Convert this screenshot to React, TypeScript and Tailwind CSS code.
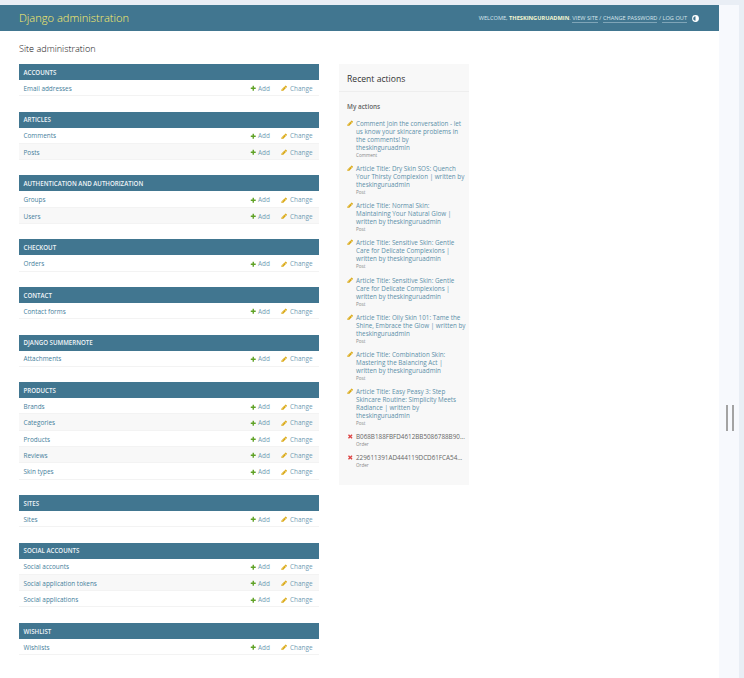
const sections: [string, string[]][] = [
  ["ACCOUNTS", ["Email addresses"]],
  ["ARTICLES", ["Comments", "Posts"]],
  ["AUTHENTICATION AND AUTHORIZATION", ["Groups", "Users"]],
  ["CHECKOUT", ["Orders"]],
  ["CONTACT", ["Contact forms"]],
  ["DJANGO SUMMERNOTE", ["Attachments"]],
  ["PRODUCTS", ["Brands", "Categories", "Products", "Reviews", "Skin types"]],
  ["SITES", ["Sites"]],
  ["SOCIAL ACCOUNTS", ["Social accounts", "Social application tokens", "Social applications"]],
  ["WISHLIST", ["Wishlists"]],
];

type Action = { kind: "change" | "delete"; lines: string[]; type: string };
const actions: Action[] = [
  { kind: "change", lines: ["Comment Join the conversation - let", "us know your skincare problems in", "the comments! by", "theskinguruadmin"], type: "Comment" },
  { kind: "change", lines: ["Article Title: Dry Skin SOS: Quench", "Your Thirsty Complexion | written by", "theskinguruadmin"], type: "Post" },
  { kind: "change", lines: ["Article Title: Normal Skin:", "Maintaining Your Natural Glow |", "written by theskinguruadmin"], type: "Post" },
  { kind: "change", lines: ["Article Title: Sensitive Skin: Gentle", "Care for Delicate Complexions |", "written by theskinguruadmin"], type: "Post" },
  { kind: "change", lines: ["Article Title: Sensitive Skin: Gentle", "Care for Delicate Complexions |", "written by theskinguruadmin"], type: "Post" },
  { kind: "change", lines: ["Article Title: Oily Skin 101: Tame the", "Shine, Embrace the Glow | written by", "theskinguruadmin"], type: "Post" },
  { kind: "change", lines: ["Article Title: Combination Skin:", "Mastering the Balancing Act |", "written by theskinguruadmin"], type: "Post" },
  { kind: "change", lines: ["Article Title: Easy Peasy 3: Step", "Skincare Routine: Simplicity Meets", "Radiance | written by", "theskinguruadmin"], type: "Post" },
  { kind: "delete", lines: ["B068B188FBFD4612BB5086788B90..."], type: "Order" },
  { kind: "delete", lines: ["229611391AD444119DCD61FCA54..."], type: "Order" },
];

function PlusIcon() {
  return (
    <svg viewBox="0 0 1792 1792" className="h-[6.5px] w-[6.5px] shrink-0">
      <path fill="#5fa225" d="M1600 796v192q0 40-28 68t-68 28h-416v416q0 40-28 68t-68 28h-192q-40 0-68-28t-28-68v-416h-416q-40 0-68-28t-28-68v-192q0-40 28-68t68-28h416v-416q0-40 28-68t68-28h192q40 0 68 28t28 68v416h416q40 0 68 28t28 68z" />
    </svg>
  );
}
function PencilIcon() {
  return (
    <svg viewBox="0 0 1792 1792" className="h-[6.5px] w-[6.5px] shrink-0">
      <path fill="#d9a60d" d="M491 1536l91-91-235-235-91 91v107h128v128h107zm523-928q0-22-22-22-10 0-17 7l-542 542q-7 7-7 17 0 22 22 22 10 0 17-7l542-542q7-7 7-17zm-54-192l416 416-832 832h-416v-416zm683 96q0 53-37 90l-166 166-416-416 166-165q36-38 90-38 53 0 91 38l235 234q37 39 37 91z" />
    </svg>
  );
}
function CrossIcon() {
  return (
    <svg viewBox="0 0 1792 1792" className="h-[6.5px] w-[6.5px] shrink-0">
      <path fill="#dd4646" d="M1490 1322q0 40-28 68l-136 136q-28 28-68 28t-68-28l-294-294-294 294q-28 28-68 28t-68-28l-136-136q-28-28-28-68t28-68l294-294-294-294q-28-28-28-68t28-68l136-136q28-28 68-28t68 28l294 294 294-294q28-28 68-28t68 28l136 136q28 28 28 68t-28 68l-294 294 294 294q28 28 28 68z" />
    </svg>
  );
}

function Section({ title, rows }: { title: string; rows: string[] }) {
  return (
    <section className="mb-[15.3px]">
      <div className="flex h-[16px] items-center bg-[#417690] pl-[4.5px] pt-[1px] text-[6.15px] font-semibold text-[#f0f5f8]">{title}</div>
      {rows.map((r, i) => (
        <div key={r} className={`flex h-[16.3px] items-center border-b border-[#f3f3f3] pl-[4.5px] pt-[2px] text-[6.4px] ${i % 2 === 1 ? "bg-[#f8f8f8]" : "bg-white"}`}>
          <span className="flex-1 text-[#447e9b]">{r}</span>
          <span className="flex w-[31px] items-center gap-[1.5px] text-[#6f9cb3]"><PlusIcon />Add</span>
          <span className="flex w-[38px] items-center gap-[2.5px] text-[#6f9cb3]"><PencilIcon />Change</span>
        </div>
      ))}
    </section>
  );
}

export default function App() {
  return (
    <div className="relative flex h-[678px] w-[744px] flex-col overflow-hidden bg-[#e9eef5] font-['Open_Sans','Noto_Sans',sans-serif]">
      <div className="h-[5px] shrink-0" />
      <div className="flex min-h-0 flex-1">
        <main className="w-[719px] bg-white">
          <header className="flex h-[26px] items-center justify-between bg-[#417690] pl-[19px] pr-[20px]">
            <span className="text-[11.1px] font-light text-[#fff06a]">Django administration</span>
            <div className="flex items-center pt-[1px] text-[5.65px] text-[#d8e6ec]">
              <span>
                WELCOME, <strong className="font-bold text-[#f4f7d0]">THESKINGURUADMIN</strong>.{" "}
                <span className="border-b border-[#7fa5b8]">VIEW SITE</span> /{" "}
                <span className="border-b border-[#7fa5b8]">CHANGE PASSWORD</span> /{" "}
                <span className="border-b border-[#7fa5b8]">LOG OUT</span>
              </span>
              <svg viewBox="0 0 16 16" className="ml-[5px] h-[7px] w-[7px]">
                <circle cx="8" cy="8" r="6.5" fill="none" stroke="#fff" strokeWidth="2.5" />
                <path d="M8 1.5a6.5 6.5 0 0 1 0 13z" fill="#fff" />
              </svg>
            </div>
          </header>
          <div className="px-[19px] pt-[11px]">
            <h1 className="h-[22px] text-[9.1px] font-light leading-[14px] text-[#111]">Site administration</h1>
            <div className="flex items-start gap-[20px]">
              <div className="w-[300px] shrink-0">
                {sections.map(([t, r]) => (
                  <Section key={t} title={t} rows={r} />
                ))}
              </div>
              <aside className="h-[421px] w-[130px] shrink-0 bg-[#f8f8f8]">
                <h2 className="flex h-[28px] items-center border-b border-[#eeeeee] pl-[8px] pt-[3px] text-[8.6px] text-[#333]">Recent actions</h2>
                <div className="px-[8px] pt-[10px]">
                  <h3 className="mb-[8px] text-[6.4px] leading-[10px] font-semibold text-[#666]">My actions</h3>
                  <ul className="flex flex-col gap-[6.15px]">
                    {actions.map((a, i) => (
                      <li key={i} className="flex gap-[2.5px]">
                        <span>{a.kind === "change" ? <PencilIcon /> : <CrossIcon />}</span>
                        <div className="min-w-0">
                          {a.lines.map((l, j) => (
                            <div key={j} className={`whitespace-nowrap text-[6.3px] leading-[8px] ${a.kind === "change" ? "text-[#5d90a9]" : "text-[#666]"}`}>{l}</div>
                          ))}
                          <div className="text-[4.6px] leading-[7px] text-[#888]">{a.type}</div>
                        </div>
                      </li>
                    ))}
                  </ul>
                </div>
              </aside>
            </div>
          </div>
        </main>
        <div className="w-[20px] bg-[#f7f9fd]" />
      </div>
      <div className="absolute left-[726px] top-[405px] flex h-[26px] gap-[3.5px]">
        <span className="w-[2px] bg-[#a3a3a3]" />
        <span className="w-[2px] bg-[#a3a3a3]" />
      </div>
    </div>
  );
}
